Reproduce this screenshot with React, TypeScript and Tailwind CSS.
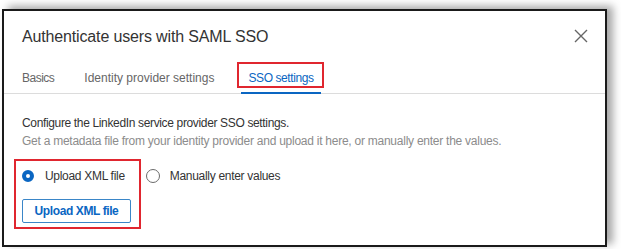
import React from "react";

const font = { fontFamily: '"Liberation Sans", Arial, sans-serif' };

function Radio({ checked }: { checked: boolean }) {
  return checked ? (
    <span className="w-[12px] h-[12px] rounded-full border-[4px] border-[#0a66c2] bg-white shrink-0" />
  ) : (
    <span className="w-[14px] h-[14px] rounded-full border border-[#6b6b6b] bg-white shrink-0" />
  );
}

export default function App() {
  return (
    <div className="w-[621px] h-[249px] bg-white pt-[9px] pl-[2px]" style={font}>
      <div className="w-[605px] h-[238px] border-2 border-[#1a1a1a] bg-white shadow-[6px_-3px_8px_rgba(0,0,0,0.35)] flex flex-col">
        {/* Header */}
        <div className="flex items-center justify-between pl-[18px] pr-[17px] pt-[12px] h-[39px]">
          <h1 className="text-[16px] tracking-[-0.15px] text-[#333333] leading-[24px]">
            Authenticate users with SAML SSO
          </h1>
          <svg width="14" height="14" viewBox="0 0 14 14" className="text-[#666666] -mt-[2px]">
            <path d="M1 1 L13 13 M13 1 L1 13" stroke="currentColor" strokeWidth="1.4" />
          </svg>
        </div>

        {/* Tabs */}
        <div className="flex items-end pl-[11px] h-[44px] border-b border-[#dcdcdc]">
          <div className="px-[7px] h-[30px] flex items-center text-[12px] tracking-[-0.5px] text-[#666666]">Basics</div>
          <div className="ml-[16px] px-[7px] h-[30px] flex items-center text-[12px] text-[#666666]">
            Identity provider settings
          </div>
          <div className="relative ml-[20px] px-[7px] h-[30px] flex items-center text-[12px] tracking-[-0.4px] text-[#0a66c2] border-b-2 border-[#0a66c2] -mb-px">
            SSO settings
            <span className="absolute left-[-4px] right-[-3px] top-[-2px] bottom-[4px] border-2 border-[#e0262f]" />
          </div>
        </div>

        {/* Body */}
        <div className="pl-[18px] pt-[20px]">
          <p className="text-[12px] leading-[18px] tracking-[-0.35px] text-[#333333]">
            Configure the LinkedIn service provider SSO settings.
          </p>
          <p className="text-[12px] leading-[18px] tracking-[-0.25px] text-[#8c8c8c]">
            Get a metadata file from your identity provider and upload it here, or manually enter the values.
          </p>

          <div className="relative mt-[18px] w-fit">
            <div className="flex items-center h-[16px]">
              <div className="flex items-center gap-[11px]">
                <Radio checked />
                <span className="text-[12px] tracking-[-0.3px] text-[#333333]">Upload XML file</span>
              </div>
              <div className="flex items-center gap-[10px] ml-[21px]">
                <Radio checked={false} />
                <span className="text-[12px] tracking-[-0.3px] text-[#333333]">Manually enter values</span>
              </div>
            </div>
            <button className="mt-[15px] w-[109px] h-[24px] border border-[#3a86c8] rounded-[2px] text-[12px] tracking-[-0.4px] font-bold text-[#0a66c2] flex items-center justify-center">
              Upload XML file
            </button>
            <span className="absolute left-[-8px] top-[-9px] w-[127px] h-[70px] border-2 border-[#e0262f]" />
          </div>
        </div>
      </div>
    </div>
  );
}
